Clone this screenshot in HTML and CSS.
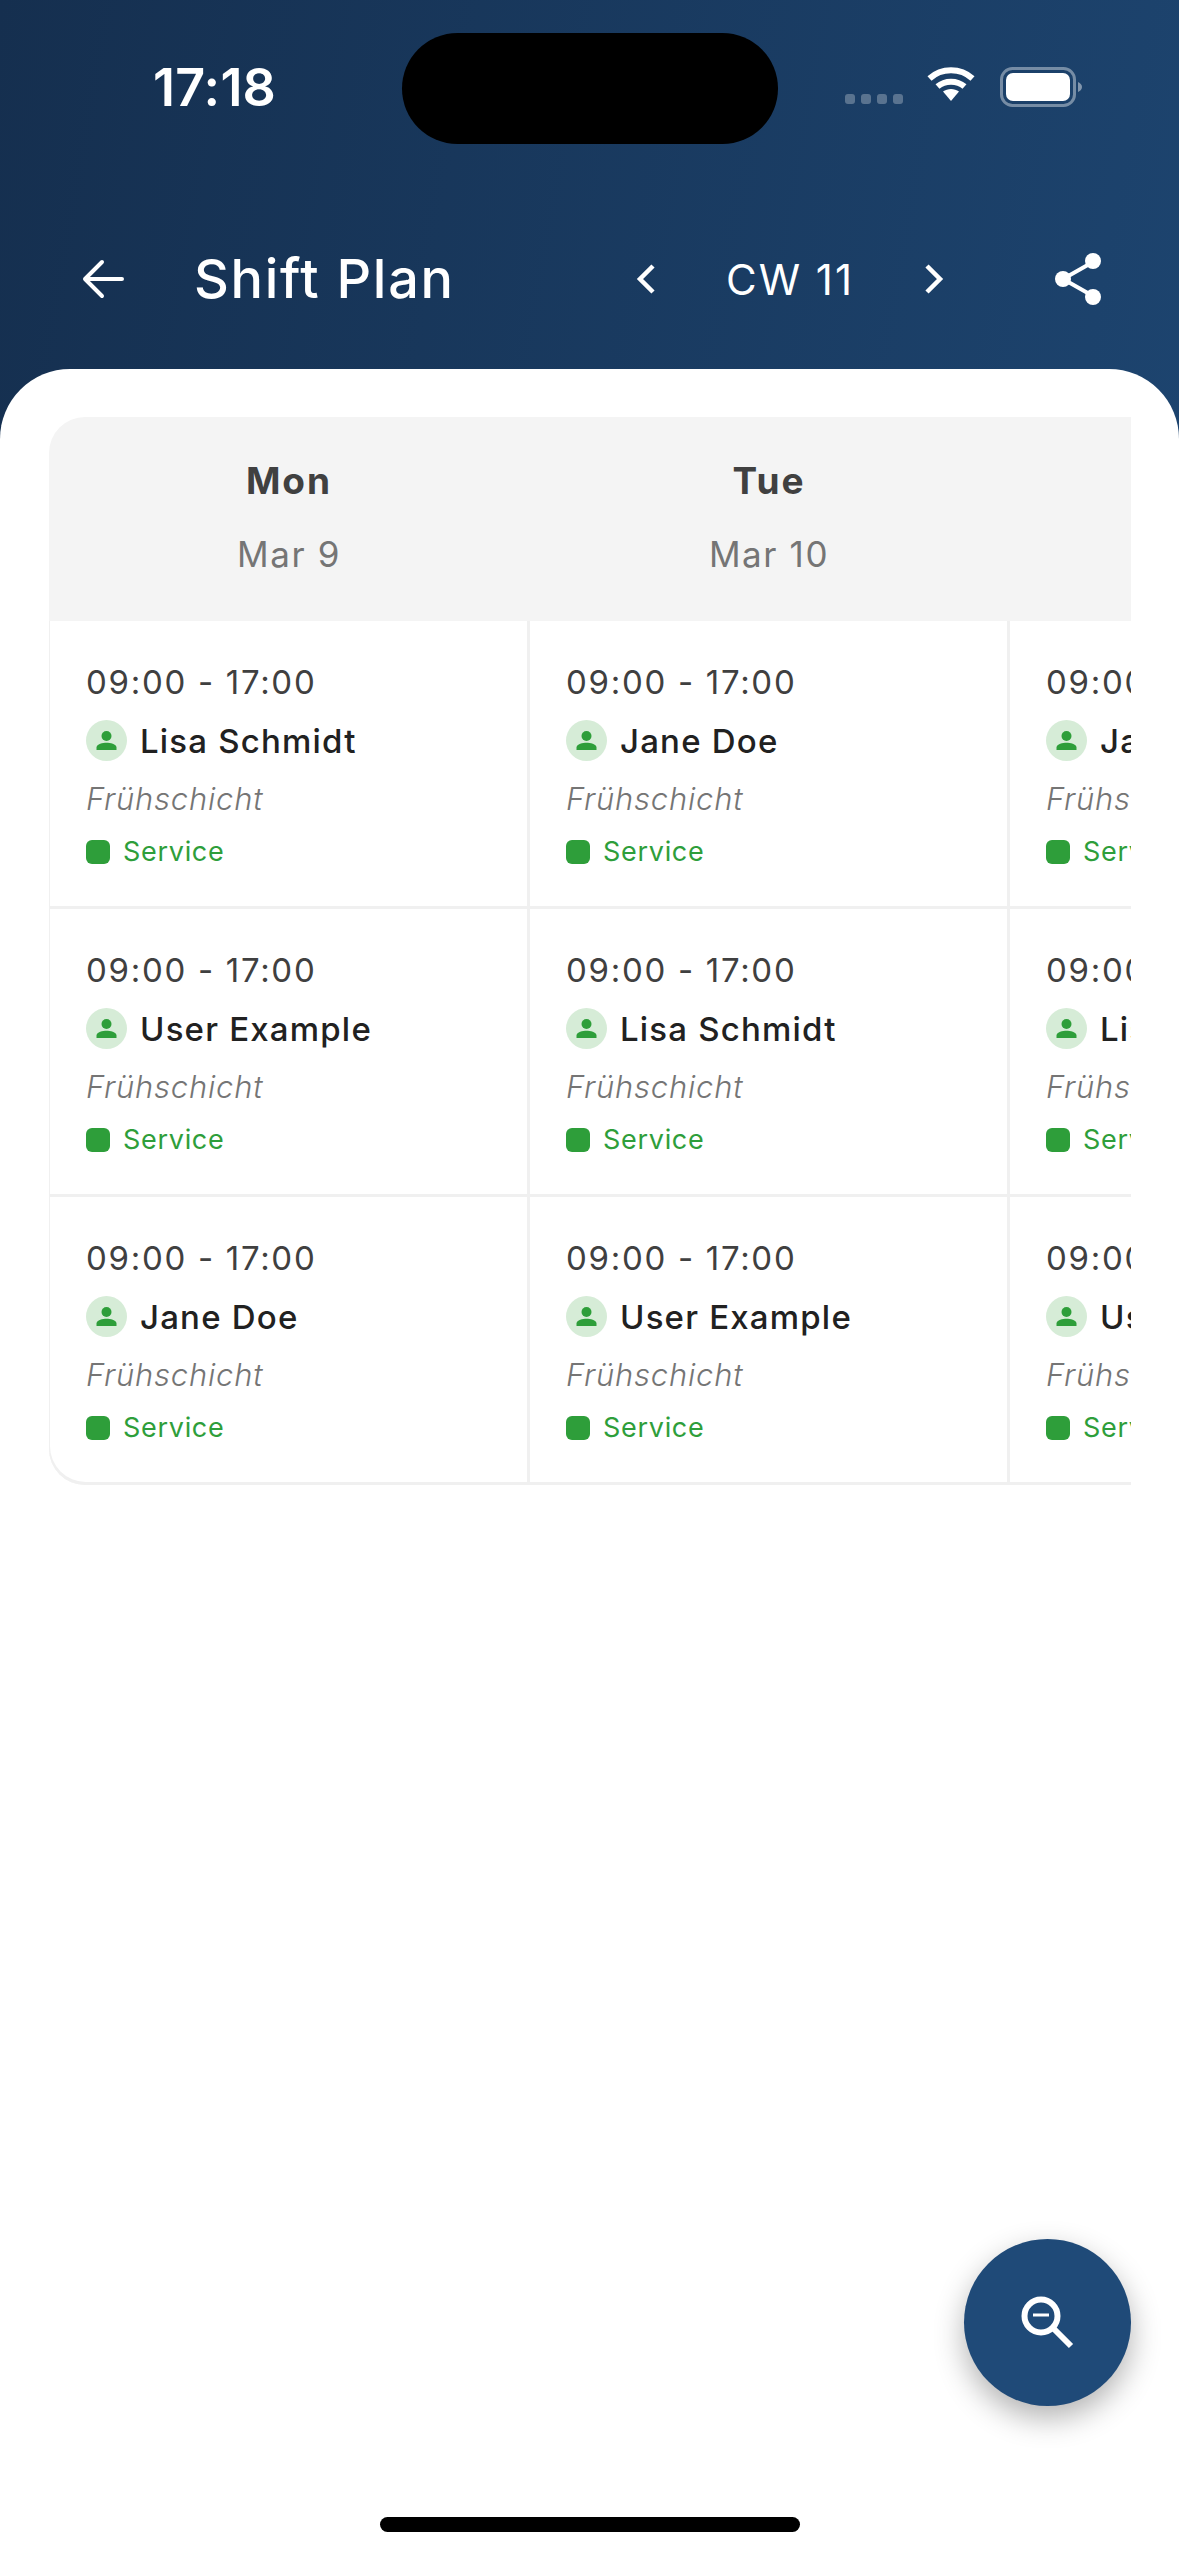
FILE: index.html
```html
<!DOCTYPE html>
<html lang="en">
<head>
    <meta charset="UTF-8">
    <meta name="viewport" content="width=device-width, initial-scale=1.0">
    <title>Shift Plan</title>
    <link rel="stylesheet" href="styles.css">
</head>
<body>
    <div class="page">
        <header class="top">
            <div class="status-bar">
                <span class="clock">17:18</span>
                <div class="island"></div>
                <div class="status-icons">
                    <div class="signal"><i></i><i></i><i></i><i></i></div>
                    <svg class="wifi" viewBox="0 0 48 36" width="48" height="36">
                        <path d="M2.500 11.500C14.500 0.500 33.500 0.500 45.500 11.500" fill="none" stroke="#fff" stroke-width="6"/>
                        <path d="M10.500 19.500C18 13 30 13 37.500 19.500" fill="none" stroke="#fff" stroke-width="6"/>
                        <path d="M16 24.500C20.500 21 27.500 21 32 24.500L24 34Z" fill="#fff"/>
                    </svg>
                    <svg class="battery" viewBox="0 0 82 40" width="82" height="40">
                        <rect x="1.500" y="1.500" width="73" height="37" rx="11" fill="none" stroke="#fff" stroke-opacity="0.4" stroke-width="3"/>
                        <rect x="6" y="6" width="64" height="28" rx="7" fill="#fff"/>
                        <path d="M78 15C80.500 16 82 18 82 20C82 22 80.500 24 78 25Z" fill="#fff" fill-opacity="0.45"/>
                    </svg>
                </div>
            </div>
            <div class="app-bar">
                <svg class="back" viewBox="0 0 42 42" width="42" height="42">
                    <path d="M40 21H3M20 4L3 21L20 38" fill="none" stroke="#fff" stroke-width="4" stroke-linecap="round" stroke-linejoin="round"/>
                </svg>
                <h1 class="title">Shift Plan</h1>
                <div class="week">
                    <svg viewBox="0 0 20 32" width="20" height="32"><path d="M17 3L4 16L17 29" fill="none" stroke="#fff" stroke-width="4.500"/></svg>
                    <span class="week-label">CW 11</span>
                    <svg viewBox="0 0 20 32" width="20" height="32"><path d="M3 3L16 16L3 29" fill="none" stroke="#fff" stroke-width="4.500"/></svg>
                </div>
                <svg class="share" viewBox="0 0 46 52" width="46" height="52">
                    <path d="M38 9L8 26L38 43" fill="none" stroke="#fff" stroke-width="4"/>
                    <circle cx="38" cy="8" r="8" fill="#fff"/>
                    <circle cx="8" cy="26" r="8" fill="#fff"/>
                    <circle cx="38" cy="44" r="8" fill="#fff"/>
                </svg>
            </div>
        </header>

        <main class="sheet">
            <div class="plan">
                <div class="plan-row plan-head">
                    <div class="day"><div class="day-name">Mon</div><div class="day-date">Mar 9</div></div>
                    <div class="day"><div class="day-name">Tue</div><div class="day-date">Mar 10</div></div>
                    <div class="day"><div class="day-name">Wed</div><div class="day-date">Mar 11</div></div>
                </div>
                <div class="plan-row">
                    <div class="cell">
                        <div class="time">09:00 - 17:00</div>
                        <div class="person"><svg class="avatar" viewBox="0 0 41 41" width="41" height="41"><circle cx="20.500" cy="20.500" r="20.500" fill="#d6ecd7"/><circle cx="20.500" cy="16" r="5" fill="#2e9e3a"/><path d="M10.500 30V27.500C10.500 24 17 22.800 20.500 22.800C24 22.800 30.500 24 30.500 27.500V30Z" fill="#2e9e3a"/></svg><span class="name">Lisa Schmidt</span></div>
                        <div class="shift">Frühschicht</div>
                        <div class="tag"><i class="tag-dot"></i><span>Service</span></div>
                    </div>
                    <div class="cell">
                        <div class="time">09:00 - 17:00</div>
                        <div class="person"><svg class="avatar" viewBox="0 0 41 41" width="41" height="41"><circle cx="20.500" cy="20.500" r="20.500" fill="#d6ecd7"/><circle cx="20.500" cy="16" r="5" fill="#2e9e3a"/><path d="M10.500 30V27.500C10.500 24 17 22.800 20.500 22.800C24 22.800 30.500 24 30.500 27.500V30Z" fill="#2e9e3a"/></svg><span class="name">Jane Doe</span></div>
                        <div class="shift">Frühschicht</div>
                        <div class="tag"><i class="tag-dot"></i><span>Service</span></div>
                    </div>
                    <div class="cell">
                        <div class="time">09:00 - 17:00</div>
                        <div class="person"><svg class="avatar" viewBox="0 0 41 41" width="41" height="41"><circle cx="20.500" cy="20.500" r="20.500" fill="#d6ecd7"/><circle cx="20.500" cy="16" r="5" fill="#2e9e3a"/><path d="M10.500 30V27.500C10.500 24 17 22.800 20.500 22.800C24 22.800 30.500 24 30.500 27.500V30Z" fill="#2e9e3a"/></svg><span class="name">Jane Doe</span></div>
                        <div class="shift">Frühschicht</div>
                        <div class="tag"><i class="tag-dot"></i><span>Service</span></div>
                    </div>
                </div>
                <div class="plan-row">
                    <div class="cell">
                        <div class="time">09:00 - 17:00</div>
                        <div class="person"><svg class="avatar" viewBox="0 0 41 41" width="41" height="41"><circle cx="20.500" cy="20.500" r="20.500" fill="#d6ecd7"/><circle cx="20.500" cy="16" r="5" fill="#2e9e3a"/><path d="M10.500 30V27.500C10.500 24 17 22.800 20.500 22.800C24 22.800 30.500 24 30.500 27.500V30Z" fill="#2e9e3a"/></svg><span class="name">User Example</span></div>
                        <div class="shift">Frühschicht</div>
                        <div class="tag"><i class="tag-dot"></i><span>Service</span></div>
                    </div>
                    <div class="cell">
                        <div class="time">09:00 - 17:00</div>
                        <div class="person"><svg class="avatar" viewBox="0 0 41 41" width="41" height="41"><circle cx="20.500" cy="20.500" r="20.500" fill="#d6ecd7"/><circle cx="20.500" cy="16" r="5" fill="#2e9e3a"/><path d="M10.500 30V27.500C10.500 24 17 22.800 20.500 22.800C24 22.800 30.500 24 30.500 27.500V30Z" fill="#2e9e3a"/></svg><span class="name">Lisa Schmidt</span></div>
                        <div class="shift">Frühschicht</div>
                        <div class="tag"><i class="tag-dot"></i><span>Service</span></div>
                    </div>
                    <div class="cell">
                        <div class="time">09:00 - 17:00</div>
                        <div class="person"><svg class="avatar" viewBox="0 0 41 41" width="41" height="41"><circle cx="20.500" cy="20.500" r="20.500" fill="#d6ecd7"/><circle cx="20.500" cy="16" r="5" fill="#2e9e3a"/><path d="M10.500 30V27.500C10.500 24 17 22.800 20.500 22.800C24 22.800 30.500 24 30.500 27.500V30Z" fill="#2e9e3a"/></svg><span class="name">Lisa Schmidt</span></div>
                        <div class="shift">Frühschicht</div>
                        <div class="tag"><i class="tag-dot"></i><span>Service</span></div>
                    </div>
                </div>
                <div class="plan-row">
                    <div class="cell">
                        <div class="time">09:00 - 17:00</div>
                        <div class="person"><svg class="avatar" viewBox="0 0 41 41" width="41" height="41"><circle cx="20.500" cy="20.500" r="20.500" fill="#d6ecd7"/><circle cx="20.500" cy="16" r="5" fill="#2e9e3a"/><path d="M10.500 30V27.500C10.500 24 17 22.800 20.500 22.800C24 22.800 30.500 24 30.500 27.500V30Z" fill="#2e9e3a"/></svg><span class="name">Jane Doe</span></div>
                        <div class="shift">Frühschicht</div>
                        <div class="tag"><i class="tag-dot"></i><span>Service</span></div>
                    </div>
                    <div class="cell">
                        <div class="time">09:00 - 17:00</div>
                        <div class="person"><svg class="avatar" viewBox="0 0 41 41" width="41" height="41"><circle cx="20.500" cy="20.500" r="20.500" fill="#d6ecd7"/><circle cx="20.500" cy="16" r="5" fill="#2e9e3a"/><path d="M10.500 30V27.500C10.500 24 17 22.800 20.500 22.800C24 22.800 30.500 24 30.500 27.500V30Z" fill="#2e9e3a"/></svg><span class="name">User Example</span></div>
                        <div class="shift">Frühschicht</div>
                        <div class="tag"><i class="tag-dot"></i><span>Service</span></div>
                    </div>
                    <div class="cell">
                        <div class="time">09:00 - 17:00</div>
                        <div class="person"><svg class="avatar" viewBox="0 0 41 41" width="41" height="41"><circle cx="20.500" cy="20.500" r="20.500" fill="#d6ecd7"/><circle cx="20.500" cy="16" r="5" fill="#2e9e3a"/><path d="M10.500 30V27.500C10.500 24 17 22.800 20.500 22.800C24 22.800 30.500 24 30.500 27.500V30Z" fill="#2e9e3a"/></svg><span class="name">User Example</span></div>
                        <div class="shift">Frühschicht</div>
                        <div class="tag"><i class="tag-dot"></i><span>Service</span></div>
                    </div>
                </div>
            </div>
        </main>

        <button class="fab">
            <svg viewBox="0 0 54 54" width="54" height="54">
                <circle cx="20" cy="20" r="16.500" fill="none" stroke="#fff" stroke-width="6"/>
                <path d="M32 32L50 50" fill="none" stroke="#fff" stroke-width="6"/>
                <path d="M12 19H28" fill="none" stroke="#fff" stroke-width="3"/>
            </svg>
        </button>
        <div class="home-bar"></div>
    </div>
</body>
</html>
```

FILE: styles.css
```css
* {
    margin: 0;
    padding: 0;
    box-sizing: border-box;
}

body {
    font-family: Inter, "Liberation Sans", sans-serif;
    background: #fff;
}

.page {
    position: relative;
    width: 1179px;
    height: 2556px;
    overflow: hidden;
    display: flex;
    flex-direction: column;
    background: linear-gradient(100deg, #152f4f 0%, #1f4a78 100%);
}

.top {
    height: 369px;
    flex-shrink: 0;
    color: #fff;
}

/* status bar */
.status-bar {
    height: 243px;
    padding-top: 33px;
    display: grid;
    grid-template-columns: 1fr 377px 1fr;
    align-items: start;
}

.clock {
    margin: 27px 0 0 153px;
    font-size: 52px;
    line-height: 56px;
    font-weight: 600;
    letter-spacing: 0.2px;
}

.island {
    height: 111px;
    margin-left: 1px;
    background: #000;
    border-radius: 56px;
}

.status-icons {
    display: flex;
    align-items: flex-start;
    justify-content: flex-end;
    gap: 24px;
    margin-top: 34px;
    padding-right: 97px;
}

.signal {
    display: flex;
    gap: 6px;
    margin-top: 27px;
}

.signal i {
    width: 10px;
    height: 10px;
    border-radius: 3px;
    background: rgba(255, 255, 255, 0.28);
}

.wifi {
    display: block;
}

.battery {
    display: block;
    margin-left: 1px;
}

/* app bar */
.app-bar {
    height: 72px;
    padding: 0 78px 0 82px;
    display: flex;
    align-items: center;
}

.title {
    margin-left: 70px;
    margin-bottom: 2px;
    font-size: 54px;
    font-weight: 500;
    letter-spacing: 1.7px;
}

.week {
    margin-left: auto;
    display: flex;
    align-items: center;
    gap: 70px;
    margin-right: 111px;
}

.week-label {
    font-size: 42px;
    letter-spacing: 2px;
}

/* white sheet */
.sheet {
    flex: 1;
    background: #fff;
    border-radius: 70px 70px 0 0;
    padding: 48px 48px 0 49px;
}

.plan {
    overflow: hidden;
    background: #f4f4f4;
    border-radius: 36px 0 0 36px;
    display: flex;
    flex-direction: column;
}

.plan-row {
    display: grid;
    grid-template-columns: repeat(3, 480px);
    height: 288px;
    width: 1440px;
}

.plan-head {
    height: 204px;
}

.day {
    text-align: center;
    padding-top: 41px;
}

.day-name {
    font-size: 37px;
    line-height: 46px;
    font-weight: 700;
    letter-spacing: 2px;
    color: #404040;
}

.day-date {
    margin-top: 27px;
    font-size: 35px;
    line-height: 46px;
    color: #757575;
    letter-spacing: 1.600px;
}

.plan-row:not(.plan-head) {
    padding-left: 1px;
    background: #f0f0f0;
}

.cell {
    background: #fff;
    margin: 0 3px 3px 0;
    padding: 41px 0 0 36px;
}

.plan-row:last-child .cell:first-child {
    border-bottom-left-radius: 36px;
}

.time {
    font-size: 33px;
    line-height: 40px;
    letter-spacing: 1.700px;
    color: #404040;
}

.person {
    display: flex;
    align-items: center;
    gap: 13px;
    margin-top: 18px;
}

.avatar {
    display: block;
    flex-shrink: 0;
}

.name {
    font-size: 33px;
    font-weight: 500;
    letter-spacing: 1.200px;
    color: #212121;
    white-space: nowrap;
}

.shift {
    margin-top: 19px;
    font-size: 31px;
    line-height: 38px;
    font-style: italic;
    font-weight: 300;
    letter-spacing: 0.800px;
    color: #757575;
}

.tag {
    display: flex;
    align-items: center;
    gap: 13px;
    margin-top: 17px;
    font-size: 27px;
    line-height: 34px;
    letter-spacing: 0.700px;
    color: #2e9e3a;
}

.tag-dot {
    width: 24px;
    height: 24px;
    border-radius: 6px;
    background: #2e9e3a;
}

/* overlays */
.fab {
    position: absolute;
    left: 964px;
    top: 2239px;
    width: 167px;
    height: 167px;
    border: none;
    border-radius: 50%;
    background: #1f4a78;
    box-shadow: 0 12px 30px rgba(0, 0, 0, 0.3);
    display: flex;
    align-items: center;
    justify-content: center;
}

.home-bar {
    position: absolute;
    left: 380px;
    top: 2517px;
    width: 420px;
    height: 15px;
    border-radius: 8px;
    background: #000;
}
```
